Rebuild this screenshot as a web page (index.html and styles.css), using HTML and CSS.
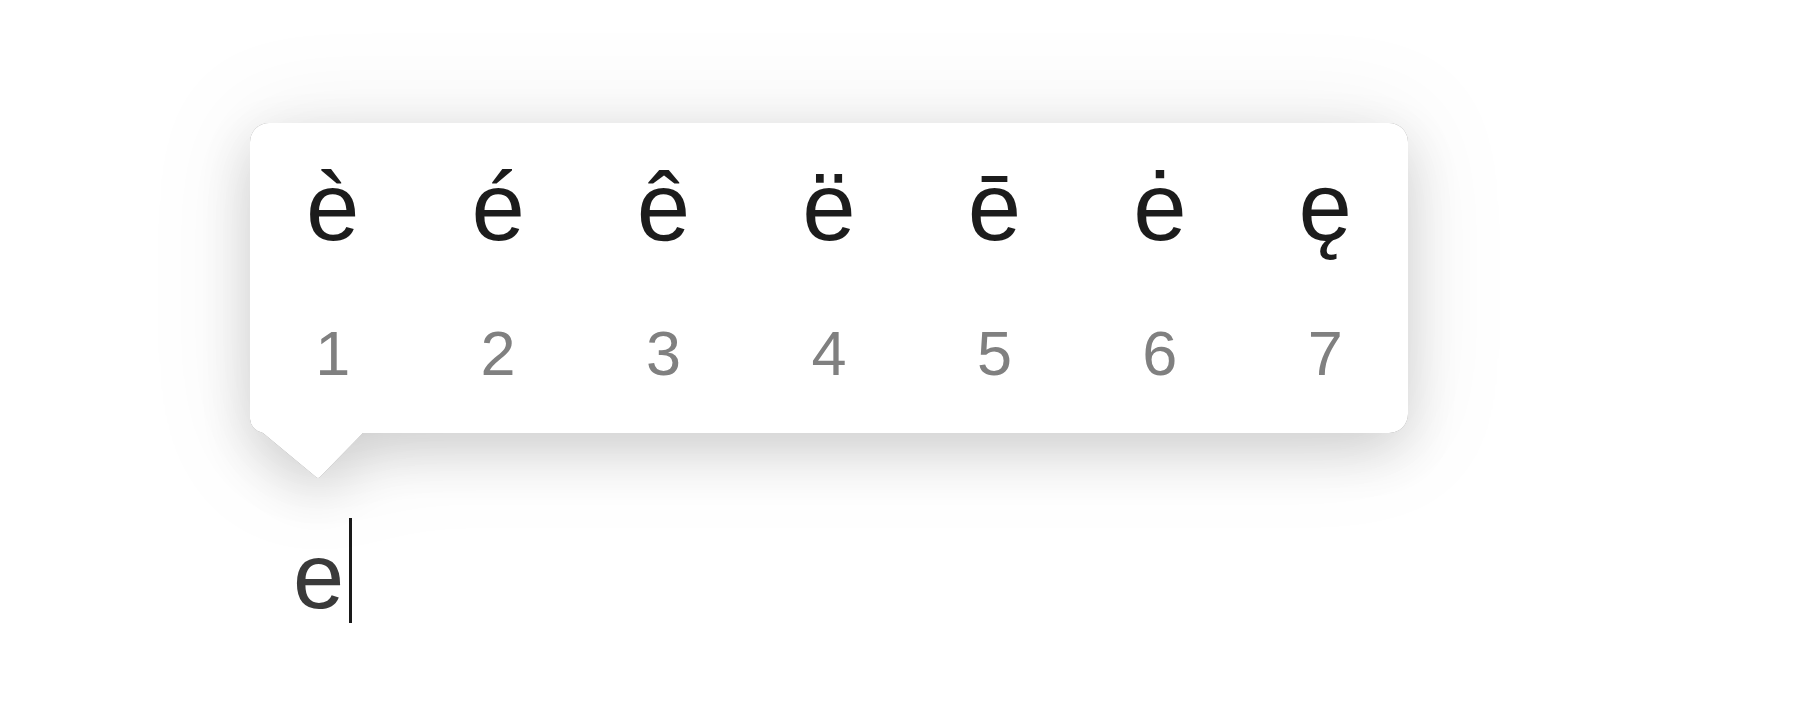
FILE: index.html
```html
<!DOCTYPE html>
<html lang="en">
<head>
    <meta charset="UTF-8">
    <title>Accent picker</title>
    <link rel="stylesheet" href="styles.css">
</head>
<body>
    <div class="page">
        <div class="picker">
            <div class="popup">
                <div class="choices">
                    <span>è</span>
                    <span>é</span>
                    <span>ê</span>
                    <span>ë</span>
                    <span>ē</span>
                    <span>ė</span>
                    <span>ę</span>
                </div>
                <div class="keys">
                    <span>1</span>
                    <span>2</span>
                    <span>3</span>
                    <span>4</span>
                    <span>5</span>
                    <span>6</span>
                    <span>7</span>
                </div>
                <svg class="tail" width="115" height="66" viewBox="0 0 115 66">
                    <path d="M0 0 L0 6 Q1 17 13 20 L66 64 Q68 66 70 64 L113 20 L113 0 Z" fill="#fff"/>
                </svg>
            </div>
        </div>
        <div class="line">
            <span class="typed">e</span>
            <span class="caret"></span>
        </div>
    </div>
</body>
</html>
```

FILE: styles.css
```css
body, html {
    margin: 0;
    padding: 0;
    height: 100%;
    overflow: hidden;
    background: #fff;
    font-family: 'Liberation Sans', Arial, sans-serif;
}

.page {
    padding: 123px 0 0 250px;
}

.picker {
    width: 1158px;
    filter: drop-shadow(0 0 0.6px rgba(0, 0, 0, 0.45))
            drop-shadow(0 18px 28px rgba(0, 0, 0, 0.16))
            drop-shadow(0 0 50px rgba(0, 0, 0, 0.07));
}

.popup {
    position: relative;
    box-sizing: border-box;
    height: 310px;
    padding-top: 36px;
    background: #fff;
    border-radius: 19px;
}

.choices,
.keys {
    display: grid;
    grid-template-columns: repeat(7, 1fr);
    text-align: center;
}

.choices {
    font-size: 96px;
    line-height: 96px;
    color: #1c1c1c;
}

.keys {
    margin-top: 67px;
    font-size: 63px;
    line-height: 63px;
    color: #808080;
}

/* little pointer under the first key */
.tail {
    position: absolute;
    left: 0;
    top: 290px;
    display: block;
}

.line {
    display: flex;
    align-items: flex-start;
    margin: 97px 0 0 43px;
}

.typed {
    font-size: 92px;
    line-height: 92px;
    color: #3a3a3a;
}

.caret {
    width: 3px;
    height: 105px;
    margin: -12px 0 0 5px;
    background: #1a1a1a;
}
```
